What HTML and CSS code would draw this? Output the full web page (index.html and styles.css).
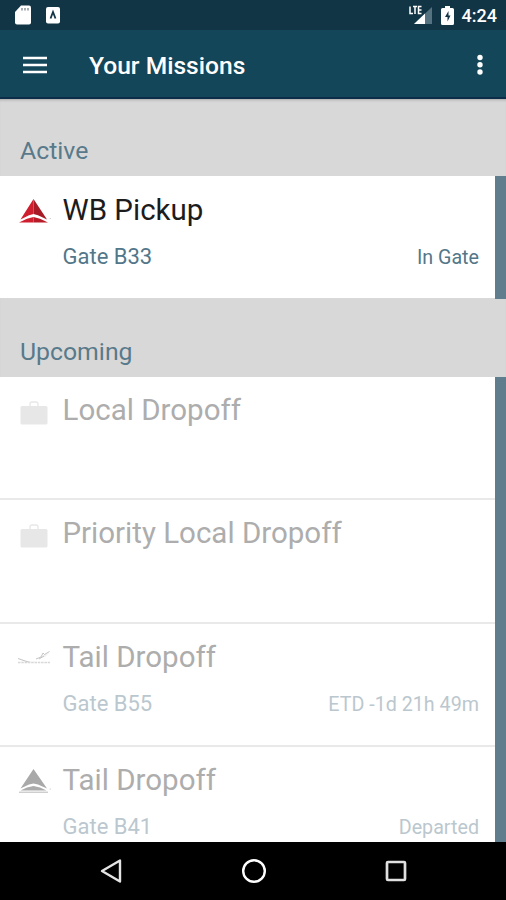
FILE: index.html
```html
<!DOCTYPE html>
<html lang="en">
<head>
<meta charset="utf-8">
<title>Your Missions</title>
<link rel="stylesheet" href="styles.css">
</head>
<body>
<svg class="defs" width="0" height="0" aria-hidden="true">
  <symbol id="bag" viewBox="0 0 28 24"><path d="M10 5V3q0-2 2-2h4q2 0 2 2v2" fill="none" stroke="currentColor" stroke-width="1.300"/><rect x=".5" y="5" width="27" height="18.500" rx="1.500" fill="currentColor"/></symbol>
</svg>
<div class="screen">
  <header class="status">
    <svg width="16" height="20" viewBox="0 0 16 20"><path d="M6 .5h8q2 0 2 2v15q0 2-2 2H2q-2 0-2-2V7z" fill="#fff"/><path d="M7 3v2.500M10 3v2.500M13 3v2.500" stroke="#77848c" stroke-width="1.300"/></svg>
    <svg class="app" width="14" height="17" viewBox="0 0 14 17"><rect width="14" height="16.500" rx="2" fill="#fff"/><path d="M4.500 11.500 7 5l2.500 6.500" fill="none" stroke="#123546" stroke-width="1.800"/></svg>
    <svg class="signal" width="24" height="20" viewBox="0 0 24 20"><path d="M23 2v17H5z" fill="#557280"/><path d="M16 8.500V19H5z" fill="#fff"/><path d="M1 1.500v7h3M4 1.500h4M6 1.500v7.500M12.500 1.500H9.500v7h3M9.500 5h3" fill="none" stroke="#fff" stroke-width="1.500"/></svg>
    <svg class="battery" width="13" height="19" viewBox="0 0 13 19"><path d="M4 0h5v2h2.500Q13 2 13 3.500v14q0 1.500-1.500 1.500h-10Q0 19 0 17.500v-14Q0 2 1.500 2H4z" fill="#fff"/><path d="M7.500 5 4 11h2.500v4.500L9.500 9.500H7.500z" fill="#123546"/></svg>
    <span class="clock">4:24</span>
  </header>
  <div class="bar">
    <svg width="24" height="18" viewBox="0 0 24 18"><path d="M0 2h24M0 9h24M0 16h24" stroke="#fff" stroke-width="2.600"/></svg>
    <h1>Your Missions</h1>
    <svg class="more" width="6" height="22" viewBox="0 0 6 22"><g fill="#fff"><circle cx="3" cy="3.500" r="2.700"/><circle cx="3" cy="10.700" r="2.700"/><circle cx="3" cy="18" r="2.700"/></g></svg>
  </div>
  <main>
    <h2 class="first">Active</h2>
    <section class="active">
      <article>
        <div class="icon"><svg width="34" height="26" viewBox="0 0 34 26"><path d="M16.500 0V15L12 16.300 3.500 20.500z" fill="#cf1f2e"/><path d="M16.500 0 30 20.500 21 16.300 16.500 15z" fill="#a81a26"/><path d="M2 23.500 10 19.800 16.500 18v5.500z" fill="#cf1f2e"/><path d="M31 23.500 23 19.800 16.500 18v5.500z" fill="#b81c29"/><circle cx="33.200" cy="19.500" r=".6" fill="#bbb"/></svg></div>
        <div class="text"><h3>WB Pickup</h3><p><span>Gate B33</span><small>In Gate</small></p></div>
      </article>
    </section>
    <h2>Upcoming</h2>
    <section class="upcoming">
      <article>
        <div class="icon"><svg class="bag" width="28" height="24"><use href="#bag"/></svg></div>
        <div class="text"><h3>Local Dropoff</h3></div>
      </article>
      <article>
        <div class="icon"><svg class="bag" width="28" height="24"><use href="#bag"/></svg></div>
        <div class="text"><h3>Priority Local Dropoff</h3></div>
      </article>
      <article>
        <div class="icon"><svg width="34" height="26" viewBox="0 0 34 26"><path d="M1 13.500l6 2.500 8 1.500 7-3 5-5 5-1.500-4 4-3 .5-5 3-5 1.500z" fill="#f1f1f1"/><path d="M1 13.500l7 2.500 5 1.500M19 14l5-2 2-4 1.500 1.500 5-3M22 14l5-3" fill="none" stroke="#bdbdbd" stroke-width=".9"/><path d="M1 17.500h32" stroke="#d8d8d8" stroke-width="1.500" stroke-dasharray="2.500 .8"/></svg></div>
        <div class="text"><h3>Tail Dropoff</h3><p><span>Gate B55</span><small>ETD -1d 21h 49m</small></p></div>
      </article>
      <article>
        <div class="icon"><svg width="34" height="26" viewBox="0 0 34 26"><path d="M16.500 1 30 20.500 21 16.500 16.500 15.500 12 16.500 3.500 20.500z" fill="#a9a9a9"/><path d="M3.500 22.500 10 19.500 16.500 18 23 19.500l6.500 3z" fill="#ababab"/><path d="M2 24.200h29" stroke="#b9b9b9" stroke-width="1"/><circle cx="33.200" cy="21" r=".6" fill="#bbb"/></svg></div>
        <div class="text"><h3>Tail Dropoff</h3><p><span>Gate B41</span><small>Departed</small></p></div>
      </article>
    </section>
  </main>
  <nav>
    <svg width="24" height="26" viewBox="0 0 24 26"><path d="M21 2.500v21L3 13z" fill="none" stroke="#e4e4e4" stroke-width="2.400" stroke-linejoin="round"/></svg>
    <svg width="26" height="26" viewBox="0 0 26 26"><circle cx="13" cy="13" r="10.800" fill="none" stroke="#fff" stroke-width="2.400"/></svg>
    <svg width="24" height="26" viewBox="0 0 24 26"><rect x="3" y="4" width="18" height="18" rx="1" fill="none" stroke="#e0e0e0" stroke-width="2.700"/></svg>
  </nav>
</div>
</body>
</html>
```
FILE: styles.css
```css
* { box-sizing: border-box; }
body, h1, h2, h3, p { margin: 0; }
body { font-family: Roboto, sans-serif; background: #d8d8d8; }
svg { display: block; flex: none; }
.defs { position: absolute; }
.screen { width: 506px; height: 900px; display: flex; flex-direction: column; overflow: hidden; }
.status { flex: none; height: 30px; background: #123546; display: flex; align-items: center; padding: 0 9px 0 15px; }
.status .app { margin-left: 15px; }
.status .signal { margin-left: auto; }
.status .battery { margin-left: 8px; }
.clock { margin-left: 8px; margin-top: 2px; font-size: 18px; line-height: 24px; font-weight: 500; color: #fff; }
.bar { flex: none; height: 69px; background: #14465a; border-bottom: 2px solid #0b2d49; display: flex; align-items: center; padding: 2px 23px 0; }
h1 { margin-left: 42px; padding-top: 2px; font-size: 24.600px; line-height: 30px; font-weight: 500; color: #fff; }
.more { margin-left: auto; }
main { flex: 1; min-height: 0; overflow: hidden; background: #d8d8d8; box-shadow: inset 0 3px 3px -2px #a8a8a8; }
h2 { height: 78px; padding: 37px 20px 0; font-size: 24.800px; line-height: 32px; font-weight: 400; color: #587a8b; }
h2.first { height: 77px; padding-top: 36px; }
section { background: #fff; border-right: 11px solid #5f7d8d; }
article { height: 123.300px; padding: 0 16px 0 17px; display: flex; border-bottom: 2px solid #e9e9e9; }
.active article { height: 123px; border-bottom: 1px solid #d8d8d8; }
.icon { width: 45.500px; padding-top: 22.500px; }
.upcoming .icon { padding-top: 21px; }
.bag { margin: 2.500px 0 0 3px; color: #e7e7e7; }
.text { flex: 1; padding-top: 14px; }
.upcoming .text { padding-top: 13.100px; }
h3 { font-size: 29.500px; line-height: 40px; font-weight: 400; color: #1c1c1c; }
p { display: flex; justify-content: space-between; margin-top: 12px; font-size: 22px; line-height: 30px; color: #527789; }
small { padding-top: 1px; font-size: 19.700px; }
.upcoming h3 { color: #adadad; }
.upcoming p { color: #bbc7ce; }
nav { flex: none; height: 58px; background: #000; display: flex; justify-content: space-between; padding: 16px 98px 0 99px; }
```
